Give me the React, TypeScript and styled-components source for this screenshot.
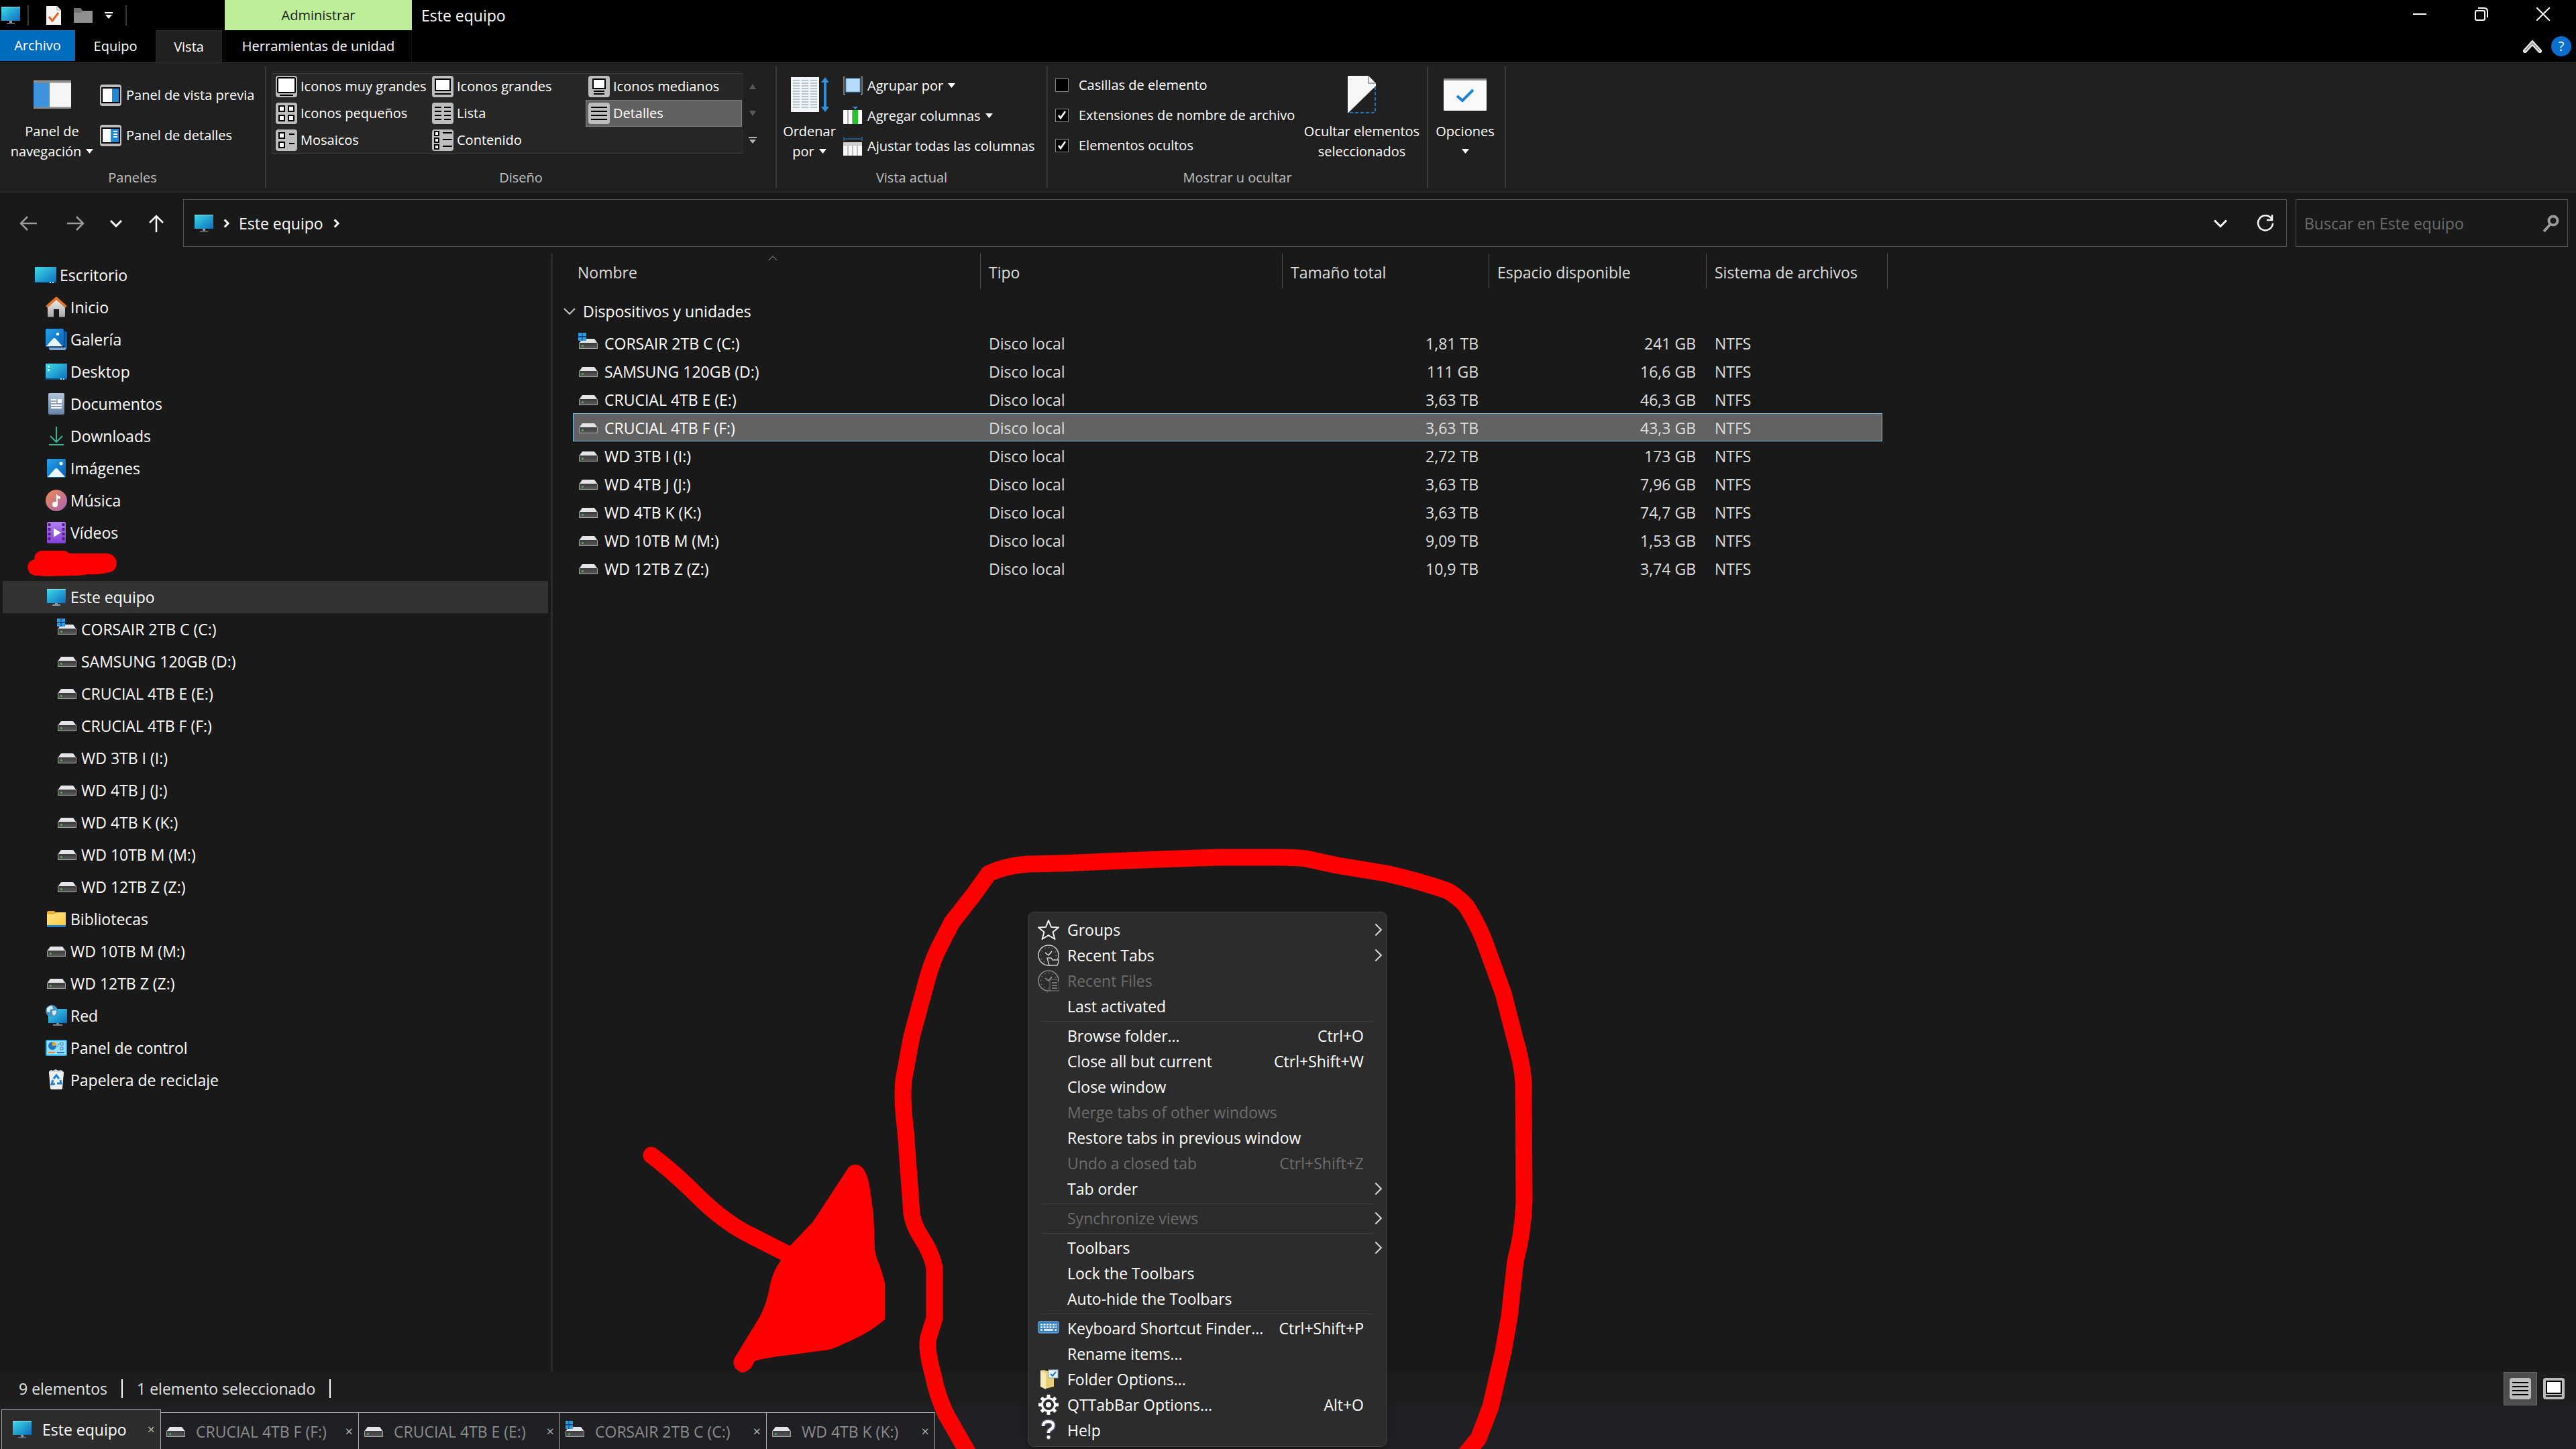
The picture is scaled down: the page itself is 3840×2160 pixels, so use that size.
import type { ReactNode } from "react";
import styled, { createGlobalStyle, css } from "styled-components";

const GlobalStyle = createGlobalStyle`
  * {
    box-sizing: border-box;
  }
  body {
    margin: 0;
    background: #191919;
    color: #fff;
    font-family: "Open Sans", "Noto Sans", sans-serif;
    font-size: 23px;
    line-height: 30px;
  }
  button, input {
    font: inherit;
    color: inherit;
  }
  button {
    background: none;
    border: 0;
    padding: 0;
    margin: 0;
    text-align: left;
    white-space: nowrap;
  }
  svg {
    display: block;
    flex: none;
  }
`;

const Window = styled.div`
  position: relative;
  display: flex;
  flex-direction: column;
  min-height: 100vh;
  overflow: hidden;
`;

/* ---------- title bar ---------- */

const TitleBar = styled.header`
  display: flex;
  height: 45px;
  background: #000;
`;

const QuickAccess = styled.div`
  display: flex;
  align-items: center;
  gap: 18px;
  width: 335px;
  padding-left: 2px;
`;

const AppIcon = styled.span`
  display: flex;
  align-items: center;
  gap: 10px;
  width: 48px;
`;

const QuickSeparator = styled.span`
  width: 3px;
  height: 30px;
  border: 1px solid #3c3c3c;
`;

const ContextHeader = styled.div`
  width: 279px;
  padding-top: 8px;
  background: #bdee98;
  color: #202020;
  font-size: 20px;
  text-align: center;
`;

const WindowTitle = styled.h1`
  flex: 1;
  margin: 0;
  padding: 8px 14px 0;
  font-size: 23px;
  font-weight: 400;
`;

const WindowButtons = styled.div`
  display: flex;
  height: 42px;
  padding-right: 3px;
`;

const WindowButton = styled.button`
  display: flex;
  align-items: center;
  justify-content: center;
  width: 92px;
`;

/* ---------- ribbon ---------- */

const RibbonTabs = styled.nav`
  display: flex;
  height: 48px;
  background: #000;
  font-size: 20px;
`;

const RibbonTab = styled.button<{ $width: number; $kind?: "file" | "active" | "context" }>`
  width: ${({ $width }) => $width}px;
  text-align: center;
  ${({ $kind }) =>
    $kind === "file" &&
    css`
      height: 46px;
      background: #006cbe;
    `}
  ${({ $kind }) =>
    $kind === "active" &&
    css`
      background: #202020;
      border: 1px solid #2b2b2b;
      border-bottom: 0;
    `}
  ${({ $kind }) =>
    $kind === "context" &&
    css`
      margin-left: 4px;
      border-left: 1px solid #141414;
      border-right: 1px solid #141414;
    `}
`;

const RibbonTools = styled.div`
  display: flex;
  align-items: center;
  gap: 14px;
  margin-left: auto;
  padding-right: 7px;
`;

const HelpButton = styled.button`
  width: 30px;
  height: 30px;
  border-radius: 50%;
  background: #0b6fd0;
  text-align: center;
`;

const Ribbon = styled.section`
  display: flex;
  height: 194px;
  padding: 5px 0 6px;
  background: #202020;
  border-top: 1px solid #2f2f2f;
  border-bottom: 1px solid #2f2f2f;
  font-size: 20px;
`;

const Group = styled.div<{ $width: number }>`
  display: flex;
  flex-direction: column;
  justify-content: space-between;
  width: ${({ $width }) => $width}px;
  border-right: 2px solid #3b3b3b;
`;

const GroupBody = styled.div<{ $start: number; $end?: number; $gap?: number }>`
  display: flex;
  justify-content: ${({ $end }) => ($end === undefined ? "flex-start" : "space-between")};
  gap: ${({ $gap = 6 }) => $gap}px;
  padding-left: ${({ $start }) => $start}px;
  padding-right: ${({ $end = 0 }) => $end}px;
`;

const GroupLabel = styled.div`
  line-height: 30px;
  text-align: center;
  color: #c0c0c0;
`;

const BigButton = styled.button<{ $width: number }>`
  width: ${({ $width }) => $width}px;
  padding-top: 10px;
  text-align: center;
`;

const BigIcon = styled.span`
  display: flex;
  align-items: center;
  justify-content: center;
  height: 64px;
  margin-bottom: 8px;
`;

const Line = styled.span`
  display: flex;
  justify-content: center;
  gap: 7px;
`;

const SmallList = styled.div<{ $top: number }>`
  display: flex;
  flex-direction: column;
  padding-top: ${({ $top }) => $top}px;
`;

const SmallButton = styled.button<{ $height: number }>`
  display: flex;
  align-items: center;
  gap: 7px;
  height: ${({ $height }) => $height}px;
`;

const Gallery = styled.div`
  display: grid;
  grid-template-columns: repeat(3, 233px);
  grid-auto-rows: 40px;
  align-self: flex-start;
  height: 120px;
  margin-top: 10px;
  padding: 0 2px;
  background: #272727;
  box-shadow: inset 0 1px #3c3c3c, inset 0 -1px #3c3c3c, inset 1px 0 #303030;
`;

const GalleryItem = styled.button<{ $selected?: boolean }>`
  display: flex;
  align-items: center;
  gap: 5px;
  padding-left: 3px;
  border: 1px solid ${({ $selected }) => ($selected ? "#7a7a7a" : "transparent")};
  background: ${({ $selected }) => ($selected ? "#616161" : "none")};
`;

const GalleryScroll = styled.div`
  display: flex;
  flex-direction: column;
  width: 28px;
  margin-top: 10px;
`;

const ScrollButton = styled.button`
  display: flex;
  align-items: center;
  justify-content: center;
  height: 40px;
`;

const CheckRow = styled.label`
  display: flex;
  align-items: center;
  gap: 15px;
  height: 45px;
  white-space: nowrap;
`;

const CheckBox = styled.input`
  appearance: none;
  width: 20px;
  height: 20px;
  margin: 0;
  background: #000;
  border: 1px solid #8a8a8a;
  &:checked {
    background: #000
      url("data:image/svg+xml,%3Csvg xmlns='http://www.w3.org/2000/svg' viewBox='0 0 18 18'%3E%3Cpath d='M4 9l3 4 7-10' fill='none' stroke='white' stroke-width='2.6'/%3E%3C/svg%3E")
      center / 18px no-repeat;
  }
`;

/* ---------- address row ---------- */

const AddressRow = styled.div`
  display: flex;
  height: 91px;
  padding: 10px 12px;
`;

const NavButtons = styled.div`
  display: flex;
  width: 261px;
  button:first-child {
    margin-right: 11px;
  }
`;

const NavButton = styled.button`
  display: flex;
  align-items: center;
  justify-content: center;
  width: 60px;
`;

const AddressBox = styled.div`
  display: flex;
  align-items: center;
  flex: 1;
  gap: 12px;
  height: 71px;
  padding: 0 18px 0 16px;
  border: 1px solid #535353;
`;

const AddressTools = styled.div`
  display: flex;
  align-items: center;
  gap: 44px;
  margin-left: auto;
`;

const SearchBox = styled.label`
  display: flex;
  align-items: center;
  width: 406px;
  height: 71px;
  margin-left: 13px;
  padding: 0 12px;
  border: 1px solid #535353;
`;

const SearchInput = styled.input`
  flex: 1;
  min-width: 0;
  padding: 0;
  background: none;
  border: 0;
  outline: 0;
  &::placeholder {
    color: #6b6b6b;
    opacity: 1;
  }
`;

/* ---------- content ---------- */

const Content = styled.div`
  display: flex;
  flex: 1;
`;

const Sidebar = styled.aside`
  width: 824px;
  padding: 8px 4px 0;
  border-right: 3px solid #2b2b2b;
`;

const TreeRow = styled.a<{ $level: number; $selected?: boolean }>`
  display: flex;
  align-items: center;
  gap: 5px;
  height: 48px;
  padding-left: ${({ $level }) => 48 + $level * 16}px;
  background: ${({ $selected }) => ($selected ? "#333" : "none")};
  color: #fff;
  text-decoration: none;
  white-space: nowrap;
`;

const ScribbleRow = styled.div`
  display: flex;
  height: 48px;
  padding: 2px 0 0 36px;
`;

const Main = styled.main`
  flex: 1;
  padding-left: 16px;
`;

const DriveTable = styled.table`
  width: 1974px;
  table-layout: fixed;
  border-spacing: 0;
`;

const HeadCell = styled.th<{ $plain?: boolean }>`
  position: relative;
  height: 52px;
  padding: 3px 12px 0;
  border-right: 1px solid ${({ $plain }) => ($plain ? "transparent" : "#4f4f4f")};
  color: #dedede;
  font-weight: 400;
  text-align: left;
  white-space: nowrap;
  &:nth-child(2) {
    padding-left: 7px;
  }
`;

const SortMark = styled.span`
  position: absolute;
  top: 0;
  left: 48%;
`;

const GroupCell = styled.th`
  height: 60px;
  padding: 0 0 8px;
  font-weight: 400;
`;

const GroupToggle = styled.button`
  display: flex;
  align-items: center;
  gap: 11px;
  padding-top: 16px;
`;

const Cell = styled.td<{ $align?: "right" }>`
  height: 42px;
  padding: 2px 16px 0 12px;
  color: #dedede;
  text-align: ${({ $align = "left" }) => $align};
  white-space: nowrap;
`;

const NameCell = styled(Cell)`
  padding-left: 8px;
  color: #fff;
`;

const DriveRow = styled.tr<{ $selected?: boolean }>`
  ${({ $selected }) =>
    $selected &&
    css`
      ${Cell}:nth-child(n + 2):nth-child(-n + 6) {
        background: #626262;
        box-shadow: inset 0 1px #7cc0e4, inset 0 -1px #7cc0e4;
      }
      && ${Cell}:nth-child(2) {
        box-shadow: inset 1px 0 #7cc0e4, inset 0 1px #7cc0e4, inset 0 -1px #7cc0e4;
      }
      && ${Cell}:nth-child(6) {
        box-shadow: inset -1px 0 #7cc0e4, inset 0 1px #7cc0e4, inset 0 -1px #7cc0e4;
      }
    `}
`;

const DriveName = styled.span`
  display: flex;
  align-items: center;
  gap: 9px;
`;

/* ---------- bottom bars ---------- */

const StatusBar = styled.footer`
  display: flex;
  align-items: center;
  height: 50px;
  padding-left: 28px;
  background: #1d1d1d;
  color: #e2e2e2;
`;

const StatusItem = styled.span`
  display: flex;
  align-items: center;
  height: 28px;
  padding-right: 21px;
  border-right: 2px solid #fff;
  & + & {
    padding-left: 21px;
  }
`;

const ViewButtons = styled.div`
  display: flex;
  height: 50px;
  margin-left: auto;
  padding-right: 8px;
`;

const ViewButton = styled.button<{ $selected?: boolean }>`
  display: flex;
  align-items: center;
  justify-content: center;
  width: 50px;
  background: ${({ $selected }) => ($selected ? "#4d4d4d" : "none")};
  border: 1px solid ${({ $selected }) => ($selected ? "#6c6c6c" : "transparent")};
`;

const TabBar = styled.nav`
  display: flex;
  align-items: flex-end;
  height: 65px;
  padding-left: 2px;
  background: #1f2023;
`;

const Tab = styled.div<{ $active?: boolean; $width: number }>`
  display: flex;
  align-items: center;
  width: ${({ $width }) => $width}px;
  height: ${({ $active }) => ($active ? 59 : 55)}px;
  padding: ${({ $active }) => ($active ? "0 8px 0 16px" : "2px 8px 0 8px")};
  border: solid #a8a8a8;
  border-width: ${({ $active }) => ($active ? "1px 1px 0" : "1px 1px 0 0")};
  background: ${({ $active }) => ($active ? "#2c2c2c" : "none")};
  color: ${({ $active }) => ($active ? "#fff" : "#8c8c8c")};
`;

const TabLabel = styled.button`
  display: flex;
  align-items: center;
  gap: 16px;
`;

const TabClose = styled.button`
  margin-left: auto;
  color: #b4b4b4;
  font-size: 20px;
`;

/* ---------- context menu ---------- */

const Menu = styled.div`
  position: absolute;
  left: 1532px;
  bottom: 3px;
  width: 536px;
  padding: 7px 0 5px;
  background: #2c2c2c;
  border: 1px solid #454545;
  border-radius: 10px;
  box-shadow: 0 4px 10px rgba(0, 0, 0, 0.35);
`;

const MenuItem = styled.button`
  display: flex;
  align-items: center;
  width: 100%;
  height: 38px;
  padding: 0 2px 0 14px;
  &:disabled {
    color: #6d6d6d;
  }
`;

const MenuIcon = styled.span`
  width: 32px;
  margin-right: 12px;
`;

const MenuShortcut = styled.span`
  margin-left: auto;
`;

const MenuArrow = styled.span`
  display: flex;
  justify-content: flex-end;
  width: 32px;
`;

const MenuRule = styled.hr`
  height: 1px;
  margin: 3px 20px 2px;
  background: #404040;
  border: 0;
`;

const Doodle = styled.svg`
  position: absolute;
  left: 900px;
  bottom: 0;
  pointer-events: none;
`;

/* ---------- icons ---------- */

type IconProps = { children: ReactNode; w?: number; h?: number };

const Icon = ({ children, w = 32, h = 32 }: IconProps) => (
  <svg width={w} height={h} viewBox={`0 0 ${w} ${h}`} fill="none" aria-hidden="true">
    {children}
  </svg>
);

const HiddenSvg = styled.svg`
  position: absolute;
  width: 0;
  height: 0;
`;

const Gradients = () => (
  <HiddenSvg aria-hidden="true">
    <defs>
      <linearGradient id="screen" x1="0" y1="0" x2="1" y2="1">
        <stop offset="0" stopColor="#3fdbe6" />
        <stop offset="1" stopColor="#0b6cc0" />
      </linearGradient>
      <linearGradient id="photo" x1="0" y1="0" x2="1" y2="1">
        <stop offset="0" stopColor="#28a3ea" />
        <stop offset="1" stopColor="#0460b4" />
      </linearGradient>
      <linearGradient id="music" x1="0" y1="0" x2="1" y2="1">
        <stop offset="0" stopColor="#f28a50" />
        <stop offset="1" stopColor="#a463b9" />
      </linearGradient>
      <linearGradient id="video" x1="0" y1="0" x2="0" y2="1">
        <stop offset="0" stopColor="#b67df0" />
        <stop offset="1" stopColor="#8340d8" />
      </linearGradient>
      <linearGradient id="house" x1="0" y1="0" x2="0" y2="1">
        <stop offset="0" stopColor="#f0f0f0" />
        <stop offset="1" stopColor="#a8a8a8" />
      </linearGradient>
      <linearGradient id="page" x1="0" y1="0" x2="0" y2="1">
        <stop offset="0" stopColor="#b0c4dc" />
        <stop offset="1" stopColor="#6682a4" />
      </linearGradient>
      <linearGradient id="folder" x1="0" y1="0" x2="1" y2="1">
        <stop offset="0" stopColor="#ffe48c" />
        <stop offset="1" stopColor="#fbc93d" />
      </linearGradient>
      <linearGradient id="disk" x1="0" y1="0" x2="0" y2="1">
        <stop offset="0" stopColor="#3c3c3c" />
        <stop offset="1" stopColor="#5c5c5c" />
      </linearGradient>
    </defs>
  </HiddenSvg>
);

const Monitor = () => (
  <Icon w={28} h={32}>
    <rect y="3" width="28" height="21" fill="url(#screen)" />
    <path d="M0 3.500h28" stroke="#a7d6e4" />
    <path d="M12 24h4v3h4v1.500H8V27h4z" fill="#8a98a6" />
    <path d="M8 28h12" stroke="#4a545e" />
  </Icon>
);

const TreeMonitor = () => (
  <Icon>
    <g transform="translate(2 0)">
      <rect y="4" width="28" height="21" fill="url(#screen)" />
      <path d="M0 4.500h28" stroke="#a7d6e4" />
      <path d="M12 25h4v2h4v2H8v-2h4z" fill="#8a98a6" />
    </g>
  </Icon>
);

const Drive = ({ system, w = 32 }: { system?: boolean; w?: number }) => (
  <svg width={w} height="32" viewBox={`${(32 - w) / 2} 0 ${w} 32`} fill="none" aria-hidden="true">
    <path d="M7 9h18l5 7H2z" fill="#e2e4e8" />
    <rect x="2" y="15" width="28" height="9" fill="url(#disk)" />
    <path d="M2.500 15v8.500h27V15" stroke="#a4a4a4" />
    <circle cx="7.500" cy="19.500" r="1.300" fill="#3ddc58" />
    {system && (
      <>
        <rect x="1" y="0" width="12" height="12" fill="#0b3c66" />
        <path d="M1 0h5.500v5H1zM7.500 0H13v5H7.500zM1 6.500h5.500v5.500H1zM7.500 6.500H13v5.500H7.500z" fill="#2f9de6" />
      </>
    )}
  </svg>
);

const Desktop = ({ shortcuts }: { shortcuts?: boolean }) => (
  <Icon>
    <rect y="4" width="32" height="24" rx="1" fill="url(#screen)" />
    <path d="M0 26h32v1a1 1 0 0 1-1 1H1a1 1 0 0 1-1-1z" fill="#0a4f80" />
    <path d="M22 27h2M26 27h2" stroke="#bfe6ff" strokeWidth="2" />
    {shortcuts && <path d="M3 7h3v3H3zM3 12h3v3H3z" fill="#e8fbff" />}
  </Icon>
);

const House = () => (
  <Icon>
    <path d="M3 14L16 3l13 11v15a1.500 1.500 0 0 1-1.500 1.500H20V19h-8v11.500H4.500A1.500 1.500 0 0 1 3 29z" fill="url(#house)" />
    <path d="M1.500 15.500L16 2.500l14.500 13" stroke="#e0742a" strokeWidth="4" strokeLinejoin="round" />
  </Icon>
);

const Photo = () => (
  <Icon>
    <rect x="2" y="2" width="28" height="28" rx="2" fill="url(#photo)" />
    <path d="M3 29l11-12q2-2 4 0l11 12z" fill="#e8f5ff" />
    <circle cx="23" cy="9" r="2.500" fill="#fff" />
  </Icon>
);

const PhotoStack = () => (
  <Icon>
    <path d="M28 4h2a2 2 0 0 1 2 2v24H6a2 2 0 0 1-2-2h24z" fill="#0d62ae" />
    <path d="M5 28h25v2a2 2 0 0 1-1 2H7q-2 0-2-4z" fill="#80a6d2" />
    <rect width="27" height="27" rx="2" fill="url(#photo)" />
    <path d="M1 26l10-11q2-2 4 0l10 11z" fill="#e8f5ff" />
    <circle cx="18" cy="8" r="2.300" fill="#fff" />
  </Icon>
);

const DocumentIcon = () => (
  <Icon>
    <rect x="4" width="24" height="32" rx="2" fill="url(#page)" />
    <path d="M8 10h8M8 14h8M8 18h16M8 22h16" stroke="#fff" strokeWidth="2" />
    <rect x="18" y="9" width="6" height="6" fill="#fff" />
  </Icon>
);

const Download = () => (
  <Icon>
    <path d="M16 2v22M7 16l9 9 9-9M5 29h22" stroke="#36b394" strokeWidth="2" />
  </Icon>
);

const Music = () => (
  <Icon>
    <circle cx="16" cy="16" r="16" fill="url(#music)" />
    <path d="M16 22V6q2 4 6 4v4q-3 0-4-2v10z" fill="#fff" />
    <circle cx="14" cy="22" r="4" fill="#fff" />
  </Icon>
);

const Video = () => (
  <Icon>
    <rect x="2" width="28" height="32" rx="2" fill="url(#video)" />
    <path d="M5.500 2v28M26.500 2v28" stroke="#4b2384" strokeWidth="4" strokeDasharray="4 3" />
    <path d="M12 9.500l11 6.500-11 6.500z" fill="#fff" />
  </Icon>
);

const Folder = () => (
  <Icon>
    <path d="M2 6q0-2 2-2h9l3 3v4H2z" fill="#eab12f" />
    <path d="M2 9h11l3-3h14v20H2z" fill="url(#folder)" />
    <path d="M2 25h28v3H2z" fill="#1c7ec6" />
  </Icon>
);

const Network = () => (
  <Icon>
    <rect x="4" y="6" width="28" height="21" fill="url(#screen)" />
    <path d="M16 27h4v2h5v2H11v-2h5z" fill="#7c8894" />
    <circle cx="9" cy="9" r="9" fill="#4a94c2" />
    <path d="M2 5q5-5 8-3l1 4-4 1-1 4-4-1zM10 9l6-1q1 5-4 8l-2-3z" fill="#d2ecf5" />
  </Icon>
);

const ControlPanel = () => (
  <Icon>
    <rect x="1" y="5" width="30" height="22" rx="1" fill="#9adcf6" stroke="#34b2e4" strokeWidth="2" />
    <circle cx="10" cy="13" r="6" fill="#1c78c4" />
    <path d="M10 7a6 6 0 0 1 6 6h-6z" fill="#f0a028" />
    <path d="M17 15l3-5h2M22 8h4v4h-4zM22 15h4v4h-4z" stroke="#3e89bd" />
    <path d="M4 23h10" stroke="#e08b2c" strokeWidth="2" />
    <path d="M17 23h11" stroke="#1c78c4" strokeWidth="2" />
  </Icon>
);

const Bin = () => (
  <Icon>
    <path d="M5 3l3-2 3 1 4-2 4 2 4-1 4 3-3 26H8z" fill="#d5d9dc" />
    <path d="M5 4h22l-2 25q-9 2-18 0z" fill="#eceff1" />
    <path d="M12 14l4-5 4 5M22 16l1 5h-6M14 22H9l2-6" stroke="#1a80d0" strokeWidth="3" />
  </Icon>
);

const TriangleSvg = styled.svg`
  margin-top: 11px;
`;

const Triangle = ({ color = "#fff" }: { color?: string }) => (
  <TriangleSvg as="svg" width="11" height="8" viewBox="0 0 11 8" aria-hidden="true">
    <path d="M0 0h11L5.500 7z" fill={color} />
  </TriangleSvg>
);

const InlineTriangle = styled.span`
  display: flex;
  height: 30px;
`;

const chevronPaths = {
  up: "M1 13l8-8 8 8",
  down: "M1 5l8 8 8-8",
  right: "M6 2l7 7-7 7",
};

type ChevronProps = { dir: keyof typeof chevronPaths; size?: number; color?: string; stroke?: number };

const Chevron = ({ dir, size = 18, color = "#fff", stroke = 2 }: ChevronProps) => (
  <svg width={size} height={size} viewBox="0 0 18 18" fill="none" aria-hidden="true">
    <path d={chevronPaths[dir]} stroke={color} strokeWidth={(stroke * 18) / size} />
  </svg>
);

const layouts: Record<string, ReactNode> = {
  xlarge: (
    <>
      <rect x="5" y="5" width="22" height="18" fill="#fff" stroke="#000" strokeWidth="2" />
      <path d="M4 27h24" stroke="#000" strokeWidth="2" />
    </>
  ),
  huge: (
    <>
      <rect x="3" y="3" width="26" height="22" fill="#fff" stroke="#000" strokeWidth="2" rx="1" />
      <path d="M6 29h20" stroke="#000" strokeWidth="2" />
    </>
  ),
  large: (
    <>
      <rect x="5" y="5" width="22" height="17" fill="#fff" stroke="#000" strokeWidth="2" />
      <path d="M4 27h24" stroke="#000" strokeWidth="2" />
    </>
  ),
  medium: (
    <>
      <rect x="7" y="5" width="18" height="14" fill="#fff" stroke="#000" strokeWidth="2" />
      <path d="M8 23h16M8 27h16" stroke="#000" strokeWidth="2" />
    </>
  ),
  small: <path d="M5 5h8v8H5zM19 5h8v8h-8zM5 19h8v8H5zM19 19h8v8h-8z" fill="#fff" stroke="#000" strokeWidth="2" />,
  list: <path d="M4 7h10M18 7h10M4 13h10M18 13h10M4 19h10M18 19h10M4 25h10M18 25h10" stroke="#000" strokeWidth="2" />,
  details: <path d="M4 7h24M4 13h24M4 19h24M4 25h24" stroke="#000" strokeWidth="2" />,
  tiles: (
    <>
      <path d="M5 5h8v8H5zM5 19h8v8H5z" fill="#fff" stroke="#000" strokeWidth="2" />
      <path d="M20 7h8M20 21h8" stroke="#000" strokeWidth="2" />
    </>
  ),
  content: (
    <>
      <path d="M4 3h6v6H4zM4 13h6v6H4zM4 23h6v6H4z" fill="#fff" stroke="#000" strokeWidth="2" />
      <path d="M16 5h14M16 15h14M16 25h14" stroke="#000" strokeWidth="2" />
    </>
  ),
  preview: (
    <>
      <rect x="3" y="5" width="26" height="22" fill="#fff" stroke="#000" strokeWidth="2" />
      <rect x="18" y="6" width="10" height="20" fill="#1d8ad8" />
    </>
  ),
  detailPane: (
    <>
      <rect x="3" y="5" width="26" height="22" fill="#fff" stroke="#000" strokeWidth="2" />
      <rect x="16" y="6" width="12" height="20" fill="#1d8ad8" />
      <path d="M20 10h6M20 14h6M20 18h6" stroke="#fff" strokeWidth="2" />
    </>
  ),
};

const LayoutIcon = ({ name }: { name: string }) => (
  <Icon>
    <rect width="32" height="32" rx="4" fill="#bdbdbd" />
    {layouts[name]}
  </Icon>
);

const Gear = () => (
  <Icon>
    <g stroke="#fff">
      <circle cx="16" cy="16" r="9.500" strokeWidth="3" />
      {[0, 45, 90, 135, 180, 225, 270, 315].map((a) => (
        <path key={a} d="M16 6V1" strokeWidth="5" transform={`rotate(${a} 16 16)`} />
      ))}
      <circle cx="16" cy="16" r="3" strokeWidth="2" fill="#fff" />
    </g>
  </Icon>
);

const Clock = ({ file }: { file?: boolean }) => (
  <Icon>
    <circle cx="16" cy="16" r="15" stroke={file ? "#8a8a8a" : "#c6c6c6"} strokeWidth="1.500" />
    <circle cx="16" cy="16" r="11.500" stroke="#969696" strokeWidth="1.500" strokeDasharray="1 5" />
    <path d="M11 12l5 4 5-6" stroke={file ? "#9c9c9c" : "#e8e8e8"} strokeWidth="1.500" />
    {file ? (
      <>
        <path d="M18 14h10l4 4v13H18z" fill="#2c2c2c" stroke="#747474" />
        <path d="M21 19h8M21 23h8M21 27h8" stroke="#747474" strokeWidth="2" />
      </>
    ) : (
      <path d="M14 20h6l2 3h9v3l-2 5H17z" fill="#2c2c2c" stroke="#c6c6c6" strokeWidth="1.500" />
    )}
  </Icon>
);

const menuIcons: Record<string, ReactNode> = {
  star: (
    <Icon>
      <path d="M16 2l4 10 11 .5-8.500 7 3 10.500L16 24l-9.500 6 3-10.500-8.500-7L12 12z" stroke="#f2f2f2" strokeWidth="2" strokeLinejoin="round" />
    </Icon>
  ),
  tabs: <Clock />,
  files: <Clock file />,
  keyboard: (
    <Icon>
      <rect x="1" y="6" width="30" height="17" rx="1.500" fill="#2f7fc8" stroke="#8ec2ea" />
      <path d="M4 10.500h24M4 14.500h24" stroke="#fff" strokeWidth="2.500" strokeDasharray="3 1.500" />
      <path d="M4 18.500h3M9 18.500h14M25 18.500h3" stroke="#fff" strokeWidth="2.500" />
    </Icon>
  ),
  folder: (
    <Icon>
      <path d="M4 3q6-2 10 1h10v23l-12 3-8-3z" fill="#e6cf74" />
      <path d="M4 3l8 4v24l-8-4z" fill="#f6eab0" />
      <rect x="16" y="2" width="14" height="12" fill="#e8f2fb" stroke="#8aa9c4" />
      <path d="M19 8l3 3 5-6" stroke="#2377c2" strokeWidth="2" />
    </Icon>
  ),
  gear: <Gear />,
  help: (
    <Icon>
      <path d="M8 10q0-7 8-7 7 0 7 6 0 4-4 6-3 1-3 5" stroke="#5b5b78" strokeWidth="7" />
      <path d="M8 10q0-7 8-7 7 0 7 6 0 4-4 6-3 1-3 5" stroke="#fff" strokeWidth="4" />
      <circle cx="16" cy="26.500" r="3" fill="#fff" stroke="#5b5b78" />
    </Icon>
  ),
};

/* ---------- data ---------- */

const drives = [
  ["CORSAIR 2TB C (C:)", "1,81 TB", "241 GB"],
  ["SAMSUNG 120GB (D:)", "111 GB", "16,6 GB"],
  ["CRUCIAL 4TB E (E:)", "3,63 TB", "46,3 GB"],
  ["CRUCIAL 4TB F (F:)", "3,63 TB", "43,3 GB"],
  ["WD 3TB I (I:)", "2,72 TB", "173 GB"],
  ["WD 4TB J (J:)", "3,63 TB", "7,96 GB"],
  ["WD 4TB K (K:)", "3,63 TB", "74,7 GB"],
  ["WD 10TB M (M:)", "9,09 TB", "1,53 GB"],
  ["WD 12TB Z (Z:)", "10,9 TB", "3,74 GB"],
];

type TreeNode = { label: string; level: number; icon: ReactNode; selected?: boolean };

const quickTree: TreeNode[] = [
  { label: "Escritorio", level: 0, icon: <Desktop /> },
  { label: "Inicio", level: 1, icon: <House /> },
  { label: "Galería", level: 1, icon: <PhotoStack /> },
  { label: "Desktop", level: 1, icon: <Desktop shortcuts /> },
  { label: "Documentos", level: 1, icon: <DocumentIcon /> },
  { label: "Downloads", level: 1, icon: <Download /> },
  { label: "Imágenes", level: 1, icon: <Photo /> },
  { label: "Música", level: 1, icon: <Music /> },
  { label: "Vídeos", level: 1, icon: <Video /> },
];

const deviceTree: TreeNode[] = [
  { label: "Este equipo", level: 1, icon: <TreeMonitor />, selected: true },
  ...drives.map(([label], i) => ({ label, level: 2, icon: <Drive system={i === 0} /> })),
  { label: "Bibliotecas", level: 1, icon: <Folder /> },
  { label: "WD 10TB M (M:)", level: 1, icon: <Drive /> },
  { label: "WD 12TB Z (Z:)", level: 1, icon: <Drive /> },
  { label: "Red", level: 1, icon: <Network /> },
  { label: "Panel de control", level: 1, icon: <ControlPanel /> },
  { label: "Papelera de reciclaje", level: 1, icon: <Bin /> },
];

const galleryItems = [
  ["huge", "Iconos muy grandes"],
  ["large", "Iconos grandes"],
  ["medium", "Iconos medianos"],
  ["small", "Iconos pequeños"],
  ["list", "Lista"],
  ["details", "Detalles"],
  ["tiles", "Mosaicos"],
  ["content", "Contenido"],
];

const tabs = [
  { label: "CRUCIAL 4TB F (F:)", width: 295 },
  { label: "CRUCIAL 4TB E (E:)", width: 300 },
  { label: "CORSAIR 2TB C (C:)", width: 308 },
  { label: "WD 4TB K (K:)", width: 251 },
];

type MenuEntry = { label: string; icon?: string; keys?: string; sub?: boolean; off?: boolean };

const menuSections: MenuEntry[][] = [
  [
    { label: "Groups", icon: "star", sub: true },
    { label: "Recent Tabs", icon: "tabs", sub: true },
    { label: "Recent Files", icon: "files", off: true },
    { label: "Last activated" },
  ],
  [
    { label: "Browse folder...", keys: "Ctrl+O" },
    { label: "Close all but current", keys: "Ctrl+Shift+W" },
    { label: "Close window" },
    { label: "Merge tabs of other windows", off: true },
    { label: "Restore tabs in previous window" },
    { label: "Undo a closed tab", keys: "Ctrl+Shift+Z", off: true },
    { label: "Tab order", sub: true },
  ],
  [{ label: "Synchronize views", sub: true, off: true }],
  [{ label: "Toolbars", sub: true }, { label: "Lock the Toolbars" }, { label: "Auto-hide the Toolbars" }],
  [
    { label: "Keyboard Shortcut Finder...", icon: "keyboard", keys: "Ctrl+Shift+P" },
    { label: "Rename items..." },
    { label: "Folder Options...", icon: "folder" },
    { label: "QTTabBar Options...", icon: "gear", keys: "Alt+O" },
    { label: "Help", icon: "help" },
  ],
];

/* ---------- parts ---------- */

function Tree({ nodes }: { nodes: TreeNode[] }) {
  return (
    <>
      {nodes.map(({ label, level, icon, selected }) => (
        <TreeRow key={`${level}${label}`} href="#" $level={level} $selected={selected}>
          {icon}
          {label}
        </TreeRow>
      ))}
    </>
  );
}

function Header() {
  return (
    <>
      <TitleBar>
        <QuickAccess>
          <AppIcon>
            <Monitor />
            <QuickSeparator />
          </AppIcon>
          <Icon w={24} h={28}>
            <path d="M1 0h16l6 6v22H1z" fill="#f4f4f4" />
            <path d="M17 0v6h6" stroke="#9b9b9b" />
            <path d="M5 16l5 6 9-12" stroke="#e0632a" strokeWidth="3" />
          </Icon>
          <Icon w={28} h={24}>
            <path d="M0 1h10l3 4h15v18H0z" fill="#8f8f92" />
            <path d="M0 1h10l3 4-2 3H0z" fill="#747476" />
          </Icon>
          <Icon w={12} h={12}>
            <path d="M0 2h12" stroke="#fff" strokeWidth="2" />
            <path d="M1 5h10l-5 6z" fill="#fff" />
          </Icon>
          <QuickSeparator />
        </QuickAccess>
        <ContextHeader>Administrar</ContextHeader>
        <WindowTitle>Este equipo</WindowTitle>
        <WindowButtons>
          <WindowButton aria-label="Minimizar">
            <Icon w={20} h={20}>
              <path d="M0 10h20" stroke="#fff" strokeWidth="2" />
            </Icon>
          </WindowButton>
          <WindowButton aria-label="Restaurar">
            <Icon w={20} h={20}>
              <rect x="1" y="5" width="14" height="14" rx="2" stroke="#fff" strokeWidth="2" />
              <path d="M5 1h9q5 0 5 5v9" stroke="#fff" strokeWidth="2" />
            </Icon>
          </WindowButton>
          <WindowButton aria-label="Cerrar">
            <Icon w={20} h={20}>
              <path d="M0 0l20 20M20 0L0 20" stroke="#fff" strokeWidth="2" />
            </Icon>
          </WindowButton>
        </WindowButtons>
      </TitleBar>
      <RibbonTabs>
        <RibbonTab $width={112} $kind="file">Archivo</RibbonTab>
        <RibbonTab $width={120}>Equipo</RibbonTab>
        <RibbonTab $width={99} $kind="active">Vista</RibbonTab>
        <RibbonTab $width={279} $kind="context">Herramientas de unidad</RibbonTab>
        <RibbonTools>
          <button aria-label="Minimizar la cinta">
            <Icon w={28} h={22}>
              <path d="M3 18L14 6l11 12" stroke="#f0f0f0" strokeWidth="6" strokeLinecap="round" />
              <path d="M3 18L14 6l11 12" stroke="#9c9c9c" strokeWidth="2" />
            </Icon>
          </button>
          <HelpButton>?</HelpButton>
        </RibbonTools>
      </RibbonTabs>
    </>
  );
}

function ViewRibbon() {
  return (
    <Ribbon>
      <Group $width={397}>
        <GroupBody $start={12}>
          <BigButton $width={131}>
            <BigIcon>
              <Icon w={56} h={42}>
                <rect width="56" height="42" fill="#f5f5f5" />
                <rect y="3" width="24" height="38" fill="#3d94dc" />
                <path d="M0 2h56M0 41h56" stroke="#8c8c8c" strokeWidth="3" />
              </Icon>
            </BigIcon>
            <Line>Panel de</Line>
            <Line>
              navegación <Triangle />
            </Line>
          </BigButton>
          <SmallList $top={13}>
            <SmallButton $height={60}>
              <LayoutIcon name="preview" />
              Panel de vista previa
            </SmallButton>
            <SmallButton $height={60}>
              <LayoutIcon name="detailPane" />
              Panel de detalles
            </SmallButton>
          </SmallList>
        </GroupBody>
        <GroupLabel>Paneles</GroupLabel>
      </Group>
      <Group $width={761}>
        <GroupBody $start={8} $gap={0}>
          <Gallery>
            {galleryItems.map(([name, label]) => (
              <GalleryItem key={name} $selected={name === "details"}>
                <LayoutIcon name={name} />
                {label}
              </GalleryItem>
            ))}
          </Gallery>
          <GalleryScroll>
            <ScrollButton aria-label="Fila anterior">
              <Icon w={12} h={8}>
                <path d="M1 8h10L6 0z" fill="#5a5a5a" />
              </Icon>
            </ScrollButton>
            <ScrollButton aria-label="Fila siguiente">
              <Icon w={12} h={8}>
                <path d="M1 0h10L6 8z" fill="#5a5a5a" />
              </Icon>
            </ScrollButton>
            <ScrollButton aria-label="Más">
              <Icon w={12} h={12}>
                <path d="M0 2h12" stroke="#b4b4b4" strokeWidth="2" />
                <path d="M1 5h10l-5 6z" fill="#b4b4b4" />
              </Icon>
            </ScrollButton>
          </GalleryScroll>
        </GroupBody>
        <GroupLabel>Diseño</GroupLabel>
      </Group>
      <Group $width={404}>
        <GroupBody $start={3} $gap={5}>
          <BigButton $width={91}>
            <BigIcon>
              <Icon w={56} h={52}>
                <rect width="42" height="52" fill="#f2f5f6" />
                <path d="M3 5h36M3 9h36M3 13h36M3 17h36M3 21h36M3 25h36M3 29h36M3 33h36M3 37h36M3 41h36M3 45h36" stroke="#a5b8c2" strokeWidth="1.500" strokeDasharray="10 3" />
                <path d="M51 5v42" stroke="#2d8fdd" strokeWidth="4" />
                <path d="M45 8l6-8 6 8zM45 44l6 8 6-8z" fill="#2d8fdd" />
              </Icon>
            </BigIcon>
            <Line>Ordenar</Line>
            <Line>
              por <Triangle />
            </Line>
          </BigButton>
          <SmallList $top={6}>
            <SmallButton $height={45}>
              <Icon w={29} h={28}>
                <rect x="4" y="3" width="21" height="20" fill="#b5ddfb" stroke="#5d9fd0" />
                <path d="M3 0H1v27h2M26 0h2v27h-2" stroke="#c9c9c9" />
              </Icon>
              Agrupar por
              <InlineTriangle>
                <Triangle />
              </InlineTriangle>
            </SmallButton>
            <SmallButton $height={45}>
              <Icon w={29} h={28}>
                <rect x="0" y="5" width="28" height="21" fill="#fff" />
                <path d="M7 5v21M14 5v21" stroke="#5a5a5a" />
                <rect x="14" y="5" width="8" height="21" fill="#25c425" />
                <path d="M14 0h8l-4 4z" fill="#2d8fdd" />
              </Icon>
              Agregar columnas
              <InlineTriangle>
                <Triangle />
              </InlineTriangle>
            </SmallButton>
            <SmallButton $height={45}>
              <Icon w={29} h={28}>
                <path d="M1 0v6M28 0v6M2 3h25" stroke="#2d8fdd" />
                <rect x="0" y="8" width="28" height="20" fill="#f8f8f8" />
                <path d="M0 12h28M7 13v15M14 13v15M21 13v15" stroke="#858585" />
                <path d="M0 10h28" stroke="#d0d0d0" strokeWidth="4" />
              </Icon>
              Ajustar todas las columnas
            </SmallButton>
          </SmallList>
        </GroupBody>
        <GroupLabel>Vista actual</GroupLabel>
      </Group>
      <Group $width={567}>
        <GroupBody $start={11} $end={4}>
          <SmallList $top={5}>
            <CheckRow>
              <CheckBox type="checkbox" />
              Casillas de elemento
            </CheckRow>
            <CheckRow>
              <CheckBox type="checkbox" defaultChecked />
              Extensiones de nombre de archivo
            </CheckRow>
            <CheckRow>
              <CheckBox type="checkbox" defaultChecked />
              Elementos ocultos
            </CheckRow>
          </SmallList>
          <BigButton $width={186}>
            <BigIcon>
              <Icon w={42} h={56}>
                <path d="M0 0h31l11 11v4L0 56z" fill="#f7f7f7" />
                <path d="M31 0v11h11" stroke="#8c8c8c" strokeWidth="1.500" />
                <path d="M41 16v39H0" stroke="#2d8fdd" strokeWidth="1.500" strokeDasharray="5 3" />
              </Icon>
            </BigIcon>
            <Line>Ocultar elementos</Line>
            <Line>seleccionados</Line>
          </BigButton>
        </GroupBody>
        <GroupLabel>Mostrar u ocultar</GroupLabel>
      </Group>
      <Group $width={116}>
        <GroupBody $start={0}>
          <BigButton $width={110}>
            <BigIcon>
              <Icon w={64} h={48}>
                <rect width="64" height="48" rx="1" fill="#f9f9f9" />
                <path d="M0 1.500h64" stroke="#8c8c8c" strokeWidth="3" />
                <path d="M20 26l8 7 16-16" stroke="#1d84d2" strokeWidth="4" />
              </Icon>
            </BigIcon>
            <Line>Opciones</Line>
            <Line>
              <Triangle />
            </Line>
          </BigButton>
        </GroupBody>
      </Group>
    </Ribbon>
  );
}

function Address() {
  return (
    <AddressRow>
      <NavButtons>
        <NavButton aria-label="Atrás">
          <Icon w={26} h={24}>
            <path d="M26 12H2M12 2L2 12l10 10" stroke="#9c9c9c" strokeWidth="2.500" />
          </Icon>
        </NavButton>
        <NavButton aria-label="Adelante">
          <Icon w={26} h={24}>
            <path d="M0 12h24M14 2l10 10-10 10" stroke="#9c9c9c" strokeWidth="2.500" />
          </Icon>
        </NavButton>
        <NavButton aria-label="Recientes">
          <Chevron dir="down" stroke={3} />
        </NavButton>
        <NavButton aria-label="Subir">
          <Icon w={24} h={26}>
            <path d="M12 26V2M2 12L12 2l10 10" stroke="#fff" strokeWidth="2.500" />
          </Icon>
        </NavButton>
      </NavButtons>
      <AddressBox>
        <Monitor />
        <Chevron dir="right" size={14} stroke={3} />
        <span>Este equipo</span>
        <Chevron dir="right" size={14} stroke={3} />
        <AddressTools>
          <button aria-label="Ubicaciones anteriores">
            <Chevron dir="down" size={20} stroke={3} />
          </button>
          <button aria-label="Actualizar">
            <Icon w={26} h={26}>
              <path d="M22 6A11 11 0 1 0 24 13" stroke="#fff" strokeWidth="2.500" />
              <path d="M23 0v8h-8" stroke="#fff" strokeWidth="2.500" />
            </Icon>
          </button>
        </AddressTools>
      </AddressBox>
      <SearchBox>
        <SearchInput type="search" aria-label="Buscar" placeholder="Buscar en Este equipo" />
        <Icon w={24} h={26}>
          <circle cx="15" cy="9" r="6.500" stroke="#9a9a9a" strokeWidth="4" />
          <path d="M11 14L1 25" stroke="#9a9a9a" strokeWidth="4" />
        </Icon>
      </SearchBox>
    </AddressRow>
  );
}

function Drives() {
  return (
    <DriveTable>
      <colgroup>
        {[14, 608, 450, 308, 324, 262, 8].map((width, i) => (
          <col key={i} style={{ width }} />
        ))}
      </colgroup>
      <thead>
        <tr>
          <td />
          <HeadCell scope="col">
            Nombre
            <SortMark>
              <Chevron dir="up" size={14} color="#a8a8a8" stroke={1} />
            </SortMark>
          </HeadCell>
          <HeadCell scope="col">Tipo</HeadCell>
          <HeadCell scope="col">Tamaño total</HeadCell>
          <HeadCell scope="col">Espacio disponible</HeadCell>
          <HeadCell scope="col" $plain>Sistema de archivos</HeadCell>
          <HeadCell as="td" />
        </tr>
      </thead>
      <tbody>
        <tr>
          <GroupCell colSpan={7} scope="rowgroup">
            <GroupToggle>
              <Chevron dir="down" color="#c4c4c4" stroke={2} />
              Dispositivos y unidades
            </GroupToggle>
          </GroupCell>
        </tr>
        {drives.map(([name, total, free], i) => (
          <DriveRow key={name} $selected={i === 3}>
            <Cell />
            <NameCell>
              <DriveName>
                <Drive system={i === 0} w={30} />
                {name}
              </DriveName>
            </NameCell>
            <Cell>Disco local</Cell>
            <Cell $align="right">{total}</Cell>
            <Cell $align="right">{free}</Cell>
            <Cell>NTFS</Cell>
            <Cell />
          </DriveRow>
        ))}
      </tbody>
    </DriveTable>
  );
}

function ContextMenu() {
  return (
    <Menu role="menu">
      {menuSections.map((section, i) => (
        <div key={i}>
          {i > 0 && <MenuRule />}
          {section.map(({ label, icon, keys, sub, off }) => (
            <MenuItem key={label} role="menuitem" disabled={off}>
              <MenuIcon>{icon && menuIcons[icon]}</MenuIcon>
              {label}
              <MenuShortcut>{keys}</MenuShortcut>
              <MenuArrow>{sub && <Chevron dir="right" size={22} color="#d8d8d8" />}</MenuArrow>
            </MenuItem>
          ))}
        </div>
      ))}
    </Menu>
  );
}

export default function App() {
  return (
    <Window>
      <GlobalStyle />
      <Gradients />
      <Header />
      <ViewRibbon />
      <Address />
      <Content>
        <Sidebar>
          <Tree nodes={quickTree} />
          <ScribbleRow>
            <svg width="136" height="42" viewBox="0 0 136 42" aria-hidden="true">
              <path
                d="M1 25Q2 16 11 14Q12 2 21 1H54Q60 1 63 5H118Q133 6 134 20Q133 33 118 34Q108 37 92 36L76 38L30 39L12 38Q2 36 1 25z"
                fill="#f00"
              />
            </svg>
          </ScribbleRow>
          <Tree nodes={deviceTree} />
        </Sidebar>
        <Main>
          <Drives />
        </Main>
      </Content>
      <StatusBar>
        <StatusItem>9 elementos</StatusItem>
        <StatusItem>1 elemento seleccionado</StatusItem>
        <ViewButtons>
          <ViewButton $selected aria-label="Detalles">
            <LayoutIcon name="details" />
          </ViewButton>
          <ViewButton aria-label="Iconos grandes">
            <LayoutIcon name="xlarge" />
          </ViewButton>
        </ViewButtons>
      </StatusBar>
      <TabBar>
        <Tab $active $width={238}>
          <TabLabel>
            <Monitor />
            Este equipo
          </TabLabel>
          <TabClose aria-label="Cerrar pestaña">×</TabClose>
        </Tab>
        {tabs.map(({ label, width }) => (
          <Tab key={label} $width={width}>
            <TabLabel>
              <Drive system={label.startsWith("CORSAIR")} w={28} />
              {label}
            </TabLabel>
            <TabClose aria-label="Cerrar pestaña">×</TabClose>
          </Tab>
        ))}
      </TabBar>
      <Doodle width="1440" height="920" viewBox="0 0 1440 920" aria-hidden="true">
        <g fill="none" stroke="#f00" strokeWidth="25" strokeLinecap="round" strokeLinejoin="round">
          <path d="M542 924L510 868Q497 840 491 810Q480 770 484 754L493 725V651Q490 630 473 604Q461 585 459 569L450 446Q444 400 447 370L459 305L478 235Q488 195 501 170L519 135L551 94L574 62Q600 50 634 48L680 47L827 41L918 38H1006Q1030 38 1047 40L1093 50L1166 62Q1215 73 1258 88Q1275 98 1286 111Q1303 138 1313 164L1341 241L1359 311Q1370 350 1371 375L1372 551Q1370 600 1359 640L1350 722L1341 774L1322 857L1304 904L1286 926" />
          <path d="M71 482Q105 508 138 541Q180 583 220 602L275 630" />
        </g>
        <path
          d="M365 500Q375 492 385 500Q394 510 397 534L402 569L404 622Q406 636 411 645L419 672V727Q395 748 358 763Q340 773 321 774L276 780Q240 784 225 789Q218 806 205 806Q191 800 194 786L230 727Q242 708 248 675Q252 655 264 639L276 619L312 581L335 546z"
          fill="#f00"
        />
      </Doodle>
      <ContextMenu />
    </Window>
  );
}
